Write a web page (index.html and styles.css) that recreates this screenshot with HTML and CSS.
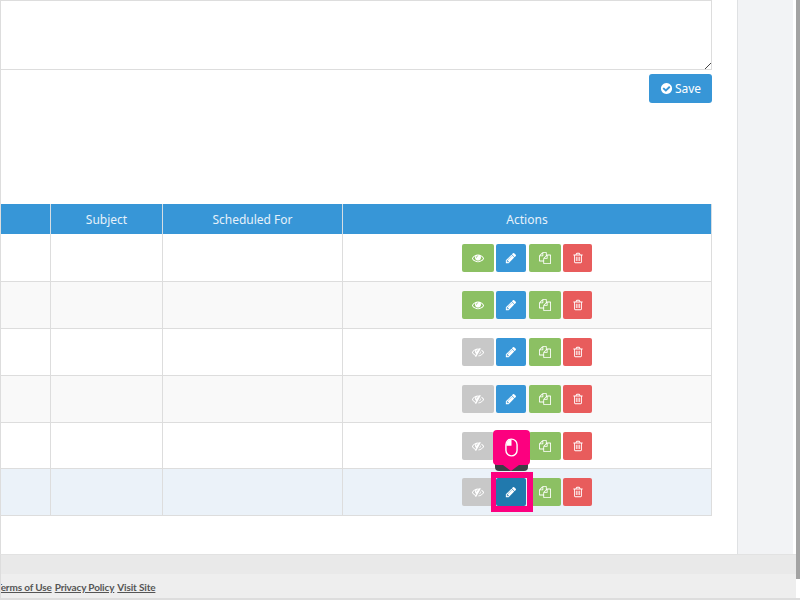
FILE: index.html
```html
<!DOCTYPE html>
<html lang="en">
<head>
<meta charset="utf-8">
<title>Scheduled messages</title>
<link rel="stylesheet" href="styles.css">
</head>
<body>
<svg class="defs" width="0" height="0" aria-hidden="true">
  <symbol id="i-eye" viewBox="0 0 1792 1792"><path fill="currentColor" d="M1664 960q-152-236-381-355 61 104 61 225 0 185-131.500 316.500t-316.500 131.500-316.500-131.500-131.500-316.500q0-121 61-225-229 119-381 355 133 205 333.500 326.500t434.500 121.500 434.500-121.500 333.500-326.500zm-720-384q0-20-14-34t-34-14q-125 0-214.500 89.500t-89.500 214.500q0 20 14 34t34 14 34-14 14-34q0-86 61-147t147-61q20 0 34-14t14-34zm848 384q0 34-20 69-140 230-376.500 368.500t-499.500 138.500-499.500-139-376.500-368q-20-35-20-69t20-69q140-229 376.500-368t499.500-139 499.500 139 376.500 368q20 35 20 69z"/></symbol>
  <symbol id="i-noeye" viewBox="0 0 1792 1792"><path fill="currentColor" d="M555 1335l78-141q-87-63-136-159t-49-203q0-121 61-225-229 117-381 353 167 258 427 375zm389-759q0-20-14-34t-34-14q-125 0-214.500 89.500t-89.500 214.500q0 20 14 34t34 14 34-14 14-34q0-86 61-147t147-61q20 0 34-14t14-34zm363-191q0 7-1 9-106 189-316 567t-315 566l-49 89q-10 16-28 16-12 0-134-70-16-10-16-28 0-12 44-87-143-65-263.500-173t-208.500-245q-20-31-20-69t20-69q153-235 380-371t496-136q89 0 180 17l54-97q10-16 28-16 5 0 18 6t31 15.500 33 18.500 31.500 18.500 19.500 11.500q16 10 16 27zm37 447q0 139-79 253.500t-209 164.500l280-502q8 45 8 84zm448 128q0 35-20 69-39 64-109 145-150 172-347.500 267t-419.500 95l74-132q212-18 392.500-137t301.500-307q-115-179-282-294l63-112q95 64 182.500 153t144.500 184q20 34 20 69z"/></symbol>
  <symbol id="i-pencil" viewBox="0 0 1792 1792"><path fill="currentColor" d="M491 1536l91-91-235-235-91 91v107h128v128h107zm523-928q0-22-22-22-10 0-17 7l-542 542q-7 7-7 17 0 22 22 22 10 0 17-7l542-542q7-7 7-17zm-54-192l416 416-832 832h-416v-416zm683 96q0 53-37 90l-166 166-416-416 166-165q36-38 90-38 53 0 91 38l235 234q37 39 37 91z"/></symbol>
  <symbol id="i-copy" viewBox="0 0 1792 1792"><path fill="currentColor" d="M1696 384q40 0 68 28t28 68v1216q0 40-28 68t-68 28h-960q-40 0-68-28t-28-68v-288h-544q-40 0-68-28t-28-68v-672q0-40 20-88t48-76l408-408q28-28 76-48t88-20h416q40 0 68 28t28 68v328q68-40 128-40h416zm-544 213l-299 299h299v-299zm-640-384l-299 299h299v-299zm196 647l316-316v-416h-384v416q0 40-28 68t-68 28h-416v640h512v-256q0-40 20-88t48-76zm956 804v-1152h-384v416q0 40-28 68t-68 28h-416v640h896z"/></symbol>
  <symbol id="i-trash" viewBox="0 0 1792 1792"><path fill="currentColor" d="M704 736v576q0 14-9 23t-23 9h-64q-14 0-23-9t-9-23v-576q0-14 9-23t23-9h64q14 0 23 9t9 23zm256 0v576q0 14-9 23t-23 9h-64q-14 0-23-9t-9-23v-576q0-14 9-23t23-9h64q14 0 23 9t9 23zm256 0v576q0 14-9 23t-23 9h-64q-14 0-23-9t-9-23v-576q0-14 9-23t23-9h64q14 0 23 9t9 23zm128 724v-948h-896v948q0 22 7 40.500t14.500 27 10.500 8.500h832q3 0 10.500-8.500t14.500-27 7-40.500zm-672-1076h448l-48-117q-7-9-17-11h-317q-10 2-17 11zm928 32v64q0 14-9 23t-23 9h-96v948q0 83-47 143.500t-113 60.500h-832q-66 0-113-58.500t-47-141.500v-952h-96q-14 0-23-9t-9-23v-64q0-14 9-23t23-9h309l70-167q15-37 54-63t79-26h320q40 0 79 26t54 63l70 167h309q14 0 23 9t9 23z"/></symbol>
  <symbol id="i-mouse" viewBox="0 0 14 20"><rect x="1" y="1" width="12" height="18" rx="6" fill="none" stroke="currentColor" stroke-width="1.500"/><path fill="currentColor" d="M7 1.500V8H1.500V7A5.500 5.500 0 0 1 7 1.500z"/></symbol>
  <symbol id="i-check" viewBox="0 0 1792 1792"><path fill="currentColor" d="M1412 734q0-28-18-46l-91-90q-19-19-45-19t-45 19l-408 407-226-226q-19-19-45-19t-45 19l-91 90q-18 18-18 46 0 27 18 45l362 362q19 19 45 19 27 0 46-19l543-543q18-18 18-45zm252 162q0 209-103 385.500t-279.500 279.500-385.500 103-385.500-103-279.500-279.500-103-385.500 103-385.500 279.500-279.500 385.500-103 385.500 103 279.500 279.500 103 385.500z"/></symbol>
</svg>

<div class="page">
  <div class="layout">
    <main class="content">
      <div class="note-box"><span class="grip"></span></div>
      <div class="save-row">
        <button class="save-btn" type="button"><svg class="save-icon"><use href="#i-check"/></svg>Save</button>
      </div>
      <div class="table">
        <div class="row head">
          <div class="cell"></div>
          <div class="cell">Subject</div>
          <div class="cell">Scheduled For</div>
          <div class="cell">Actions</div>
        </div>
        <div class="row tall">
          <div class="cell"></div><div class="cell"></div><div class="cell"></div>
          <div class="cell actions">
            <button class="act green eye"><svg><use href="#i-eye"/></svg></button>
            <button class="act blue edit"><svg><use href="#i-pencil"/></svg></button>
            <button class="act green copy"><svg><use href="#i-copy"/></svg></button>
            <button class="act red trash"><svg><use href="#i-trash"/></svg></button>
          </div>
        </div>
        <div class="row alt">
          <div class="cell"></div><div class="cell"></div><div class="cell"></div>
          <div class="cell actions">
            <button class="act green eye"><svg><use href="#i-eye"/></svg></button>
            <button class="act blue edit"><svg><use href="#i-pencil"/></svg></button>
            <button class="act green copy"><svg><use href="#i-copy"/></svg></button>
            <button class="act red trash"><svg><use href="#i-trash"/></svg></button>
          </div>
        </div>
        <div class="row">
          <div class="cell"></div><div class="cell"></div><div class="cell"></div>
          <div class="cell actions">
            <button class="act grey eye"><svg><use href="#i-noeye"/></svg></button>
            <button class="act blue edit"><svg><use href="#i-pencil"/></svg></button>
            <button class="act green copy"><svg><use href="#i-copy"/></svg></button>
            <button class="act red trash"><svg><use href="#i-trash"/></svg></button>
          </div>
        </div>
        <div class="row alt">
          <div class="cell"></div><div class="cell"></div><div class="cell"></div>
          <div class="cell actions">
            <button class="act grey eye"><svg><use href="#i-noeye"/></svg></button>
            <button class="act blue edit"><svg><use href="#i-pencil"/></svg></button>
            <button class="act green copy"><svg><use href="#i-copy"/></svg></button>
            <button class="act red trash"><svg><use href="#i-trash"/></svg></button>
          </div>
        </div>
        <div class="row short">
          <div class="cell"></div><div class="cell"></div><div class="cell"></div>
          <div class="cell actions">
            <button class="act grey eye"><svg><use href="#i-noeye"/></svg></button>
            <button class="act blue edit"><svg><use href="#i-pencil"/></svg></button>
            <button class="act green copy"><svg><use href="#i-copy"/></svg></button>
            <button class="act red trash"><svg><use href="#i-trash"/></svg></button>
          </div>
        </div>
        <div class="row hover">
          <div class="cell"></div><div class="cell"></div><div class="cell"></div>
          <div class="cell actions">
            <button class="act grey eye"><svg><use href="#i-noeye"/></svg></button>
            <span class="edit-wrap">
              <button class="act dark-blue edit"><svg><use href="#i-pencil"/></svg></button>
              <span class="spot"></span>
              <span class="hint-behind"></span>
              <span class="hint"><svg class="mouse"><use href="#i-mouse"/></svg></span>
            </span>
            <button class="act green copy"><svg><use href="#i-copy"/></svg></button>
            <button class="act red trash"><svg><use href="#i-trash"/></svg></button>
          </div>
        </div>
      </div>
    </main>
    <aside class="side"></aside>
  </div>
  <div class="band"></div>
  <footer class="footer">
    <div class="foot-links">
      <a class="foot-link" href="#">Terms of Use</a>
      <a class="foot-link" href="#">Privacy Policy</a>
      <a class="foot-link" href="#">Visit Site</a>
    </div>
  </footer>
  <div class="scrollbar"></div>
</div>
</body>
</html>
```
FILE: styles.css
```css
* { box-sizing: border-box; }
html, body { margin: 0; padding: 0; height: 100%; overflow: hidden; background: #fff; }
body { font-family: "Noto Sans", "Open Sans", sans-serif; color: #555; }
.defs { position: absolute; }
.page { position: relative; width: 800px; height: 600px; display: flex; flex-direction: column; border-bottom: 2px solid #ddd; }
.layout { display: flex; height: 554px; padding-right: 7px; }
.content { width: 738px; background: #fff; padding-right: 25px; border-right: 1px solid #dfe1e3; border-left: 1px solid #ddd; overflow: hidden; }
.side { flex: 1; background: #f2f3f5; }
.note-box { position: relative; height: 70px; margin-left: -20px; border: 1px solid #ddd; background: #fff; }
.grip { position: absolute; right: 0; bottom: 0; width: 10px; height: 10px; background: repeating-linear-gradient(135deg, transparent 0 1.500px, #444 1.500px 2.500px, transparent 2.500px 4px); clip-path: polygon(100% 0, 100% 100%, 0 100%); }
.save-row { display: flex; justify-content: flex-end; padding-top: 4px; height: 134px; }
.save-btn { display: flex; align-items: center; justify-content: center; gap: 2px; width: 63px; height: 29px; padding: 0; border: 0; border-radius: 3px; background: #3796d7; color: #fff; font: 12px "Noto Sans", sans-serif; }
.save-icon { width: 13px; height: 13px; color: #fff; }
.row { display: grid; grid-template-columns: 50px 112px 180px 369px; height: 47px; border-bottom: 1px solid #ddd; }
.row.tall { height: 48px; }
.row.short { height: 46px; }
.row.alt { background: #f9f9f9; }
.row.hover { background: #ebf2f9; }
.row.head { height: 30px; background: #3796d7; color: #e6f1fa; font-size: 12px; border-bottom: 0; }
.cell { display: flex; align-items: center; justify-content: center; border-right: 1px solid #ddd; }
.cell.actions { gap: 2px; align-items: flex-start; padding-top: 9px; }
.row.tall .cell.actions { padding-top: 10px; }
.row.head .cell { border-right-color: #d5dde3; }
.act { display: flex; align-items: center; justify-content: center; height: 28px; padding: 0; border: 0; border-radius: 2px; color: #fff; }
.act svg { width: 12px; height: 12px; }
.eye { width: 32px; }
.edit { width: 30px; margin-right: 1px; }
.copy { width: 32px; }
.trash { width: 29px; }
.green { background: #8cc063; }
.blue { background: #3796d7; }
.dark-blue { background: #2179ad; }
.red { background: #e85c5c; }
.grey { background: #c8c8c8; }
.edit-wrap { position: relative; display: flex; }
.spot { position: absolute; left: -5px; top: -6px; width: 42px; height: 40px; border: 6px solid #fc007f; border-left-width: 5px; }
.hint-behind { position: absolute; left: -1px; top: -15px; width: 33px; height: 8px; background: #3b3f45; border-radius: 0 0 4px 4px; }
.hint { position: absolute; left: -3px; top: -48px; width: 37px; height: 35px; display: flex; align-items: center; justify-content: center; border-radius: 4px; background: #fc007f; color: #fff; }
.hint::after { content: ""; position: absolute; left: 10px; bottom: -6px; border: 8px solid transparent; border-bottom: 0; border-top: 6px solid #fc007f; }
.mouse { width: 13px; height: 19px; }
.band { height: 20px; background: #e9e9e9; border-top: 1px solid #e2e2e2; border-left: 1px solid #ddd; }
.footer { flex: 1; width: 796px; display: flex; align-items: center; background: #eee; border-left: 1px solid #ddd; overflow: hidden; }
.foot-links { display: flex; gap: 3px; margin-left: -5px; font-family: Lato, sans-serif; font-size: 10px; font-weight: 700; letter-spacing: -0.15px; white-space: nowrap; padding-top: 2px; }
.foot-link { color: #555; }
.scrollbar { position: absolute; right: 0; top: 0; width: 4px; height: 579px; background: #a3a3a3; }
```
